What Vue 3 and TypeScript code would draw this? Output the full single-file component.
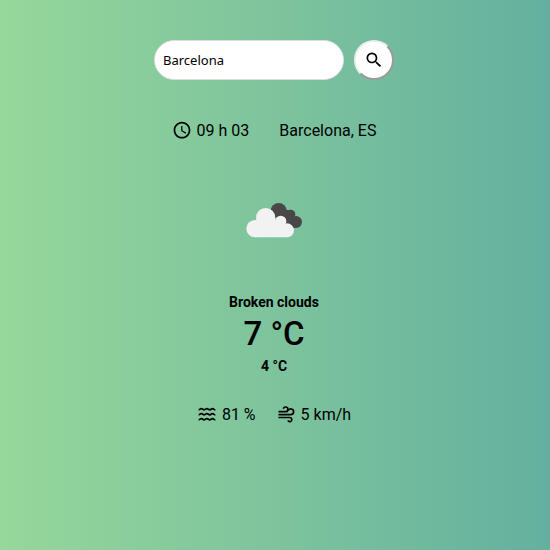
<script setup lang="ts">
import { ref } from 'vue'

const query = ref('Barcelona')
const weather = ref({
  time: '09 h 03',
  place: 'Barcelona, ES',
  description: 'Broken clouds',
  temperature: 7,
  feelsLike: 4,
  humidity: 81,
  wind: 5,
})
</script>

<template>
  <main class="app">
    <form class="search" @submit.prevent>
      <input v-model="query" class="search-input" type="text" aria-label="City" />
      <button class="search-button" type="submit" aria-label="Search">
        <svg class="icon" viewBox="0 0 24 24">
          <path d="M15.5 14h-.79l-.28-.27A6.47 6.47 0 0 0 16 9.5 6.5 6.5 0 1 0 9.5 16c1.61 0 3.09-.59 4.23-1.57l.27.28v.79l5 4.99L20.49 19l-4.99-5zm-6 0C7.01 14 5 11.99 5 9.5S7.01 5 9.5 5 14 7.01 14 9.5 11.99 14 9.5 14z" />
        </svg>
      </button>
    </form>

    <section class="row place">
      <div class="item">
        <svg class="icon" viewBox="0 1 24 24" aria-hidden="true">
          <path d="M11.99 2C6.47 2 2 6.48 2 12s4.47 10 9.99 10C17.52 22 22 17.52 22 12S17.52 2 11.99 2zM12 20c-4.42 0-8-3.58-8-8s3.58-8 8-8 8 3.58 8 8-3.58 8-8 8zm.5-13H11v6l5.25 3.15.75-1.23-4.5-2.67z" />
        </svg>
        <span>{{ weather.time }}</span>
      </div>
      <span>{{ weather.place }}</span>
    </section>

    <svg class="cloud" viewBox="-3 0 240 180" role="img" aria-label="Broken clouds">
      <g fill="#484848">
        <circle cx="131" cy="63" r="24" />
        <circle cx="167" cy="73" r="14" />
        <circle cx="183" cy="96" r="18" />
        <path d="M125 60h42l16 54h-33z" />
      </g>
      <g fill="#f2f2f2">
        <circle cx="60" cy="116" r="26" />
        <circle cx="92" cy="83" r="29" />
        <circle cx="137" cy="94" r="17" />
        <circle cx="156" cy="121" r="21" />
        <path d="M60 142V90h60l36 20v32z" />
      </g>
    </svg>

    <section class="conditions">
      <h2 class="small">{{ weather.description }}</h2>
      <p class="temperature">{{ weather.temperature }} °C</p>
      <p class="small">{{ weather.feelsLike }} °C</p>
    </section>

    <section class="row details">
      <div class="item">
        <svg class="icon stroked" viewBox="0 1 24 24" aria-hidden="true">
          <path
            v-for="y in [0, 6, 12]"
            :key="y"
            :transform="`translate(0 ${y})`"
            d="M2 6.800c1.700 0 1.700-1.400 3.300-1.400s1.700 1.400 3.400 1.400 1.700-1.400 3.300-1.400 1.700 1.400 3.300 1.400 1.700-1.400 3.400-1.400 1.700 1.400 3.300 1.400"
          />
        </svg>
        <span>{{ weather.humidity }} %</span>
      </div>
      <div class="item">
        <svg class="icon stroked" viewBox="-1 1 24 24" aria-hidden="true">
          <path d="M2 9h8.500a2.800 2.800 0 1 0-2.700-3.600" />
          <path d="M2 12.500h14.700a3.400 3.400 0 1 0-3.200-4.500" />
          <path d="M2 16h13.500a2.500 2.500 0 1 1-2.300 3.500" />
        </svg>
        <span>{{ weather.wind }} km/h</span>
      </div>
    </section>
  </main>
</template>

<style>
body {
  margin: 0;
}
</style>

<style scoped>
.app {
  box-sizing: border-box;
  min-height: 100vh;
  padding: 40px 18px 40px 16px;
  display: flex;
  flex-direction: column;
  align-items: center;
  background: linear-gradient(to right, #96d79b, #64b09f);
  color: #000;
  font: 16px/20px Roboto, sans-serif;
}
.search {
  display: flex;
  gap: 10px;
}
.search-input {
  box-sizing: border-box;
  width: 190px;
  height: 40px;
  padding: 0 8px;
  border: 1px solid #ddd;
  border-radius: 20px;
  background: #fff;
  color: #000;
  font: 13px 'Noto Sans', sans-serif;
  outline: none;
}
.search-button {
  box-sizing: border-box;
  width: 40px;
  height: 40px;
  padding: 0;
  display: flex;
  align-items: center;
  justify-content: center;
  border: 2px outset #eee;
  border-radius: 50%;
  background: #fff;
  color: #000;
}
.icon {
  width: 20px;
  height: 20px;
  fill: currentColor;
}
.stroked {
  fill: none;
  stroke: currentColor;
  stroke-width: 2;
}
.row {
  display: flex;
}
.place {
  gap: 30px;
  margin-top: 41px;
}
.item {
  display: flex;
  align-items: center;
  gap: 5px;
}
.cloud {
  width: 80px;
  height: 60px;
  margin-top: 49px;
}
.conditions {
  display: flex;
  flex-direction: column;
  align-items: center;
  margin-top: 42px;
}
.small {
  margin: 0;
  font-size: 14px;
  font-weight: 700;
  line-height: 20px;
}
.temperature {
  margin: 0;
  font-size: 33px;
  font-weight: 500;
  line-height: 44px;
}
.details {
  gap: 20px;
  margin-top: 29px;
}
</style>
